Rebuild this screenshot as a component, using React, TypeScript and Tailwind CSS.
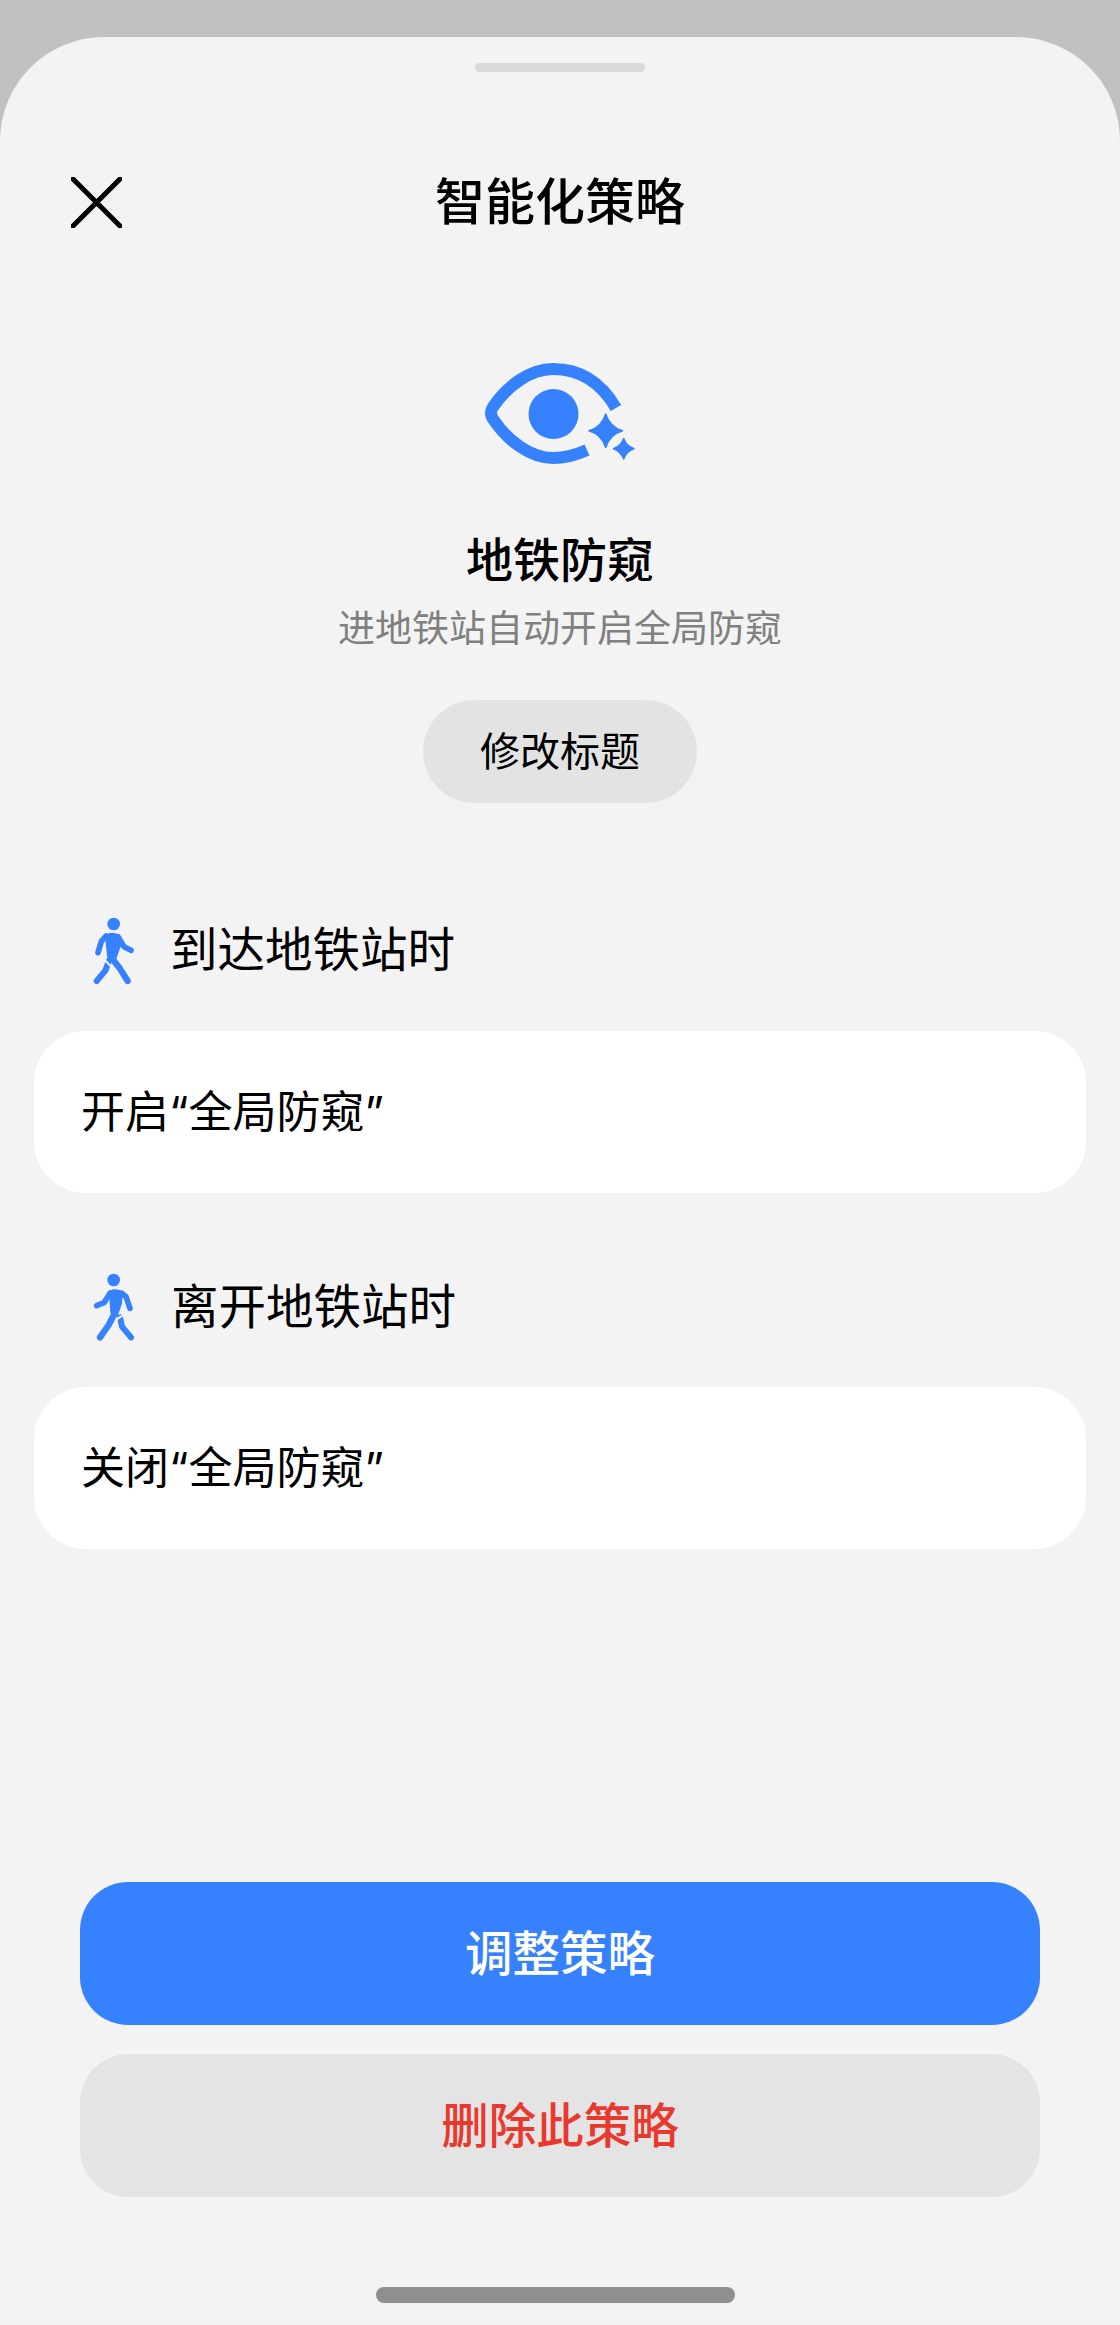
import React from 'react';

const FONT = "font-['Inter','Noto_Sans_CJK_SC',sans-serif]";
const BLUE = '#3681fd';

const EyeIcon = () => (
  <svg viewBox="10 0 220 150" className="block w-[220px] h-[150px]" fill="none">
    <path
      d="M176 68 C162 44 142 29 113 29 C90 29 67 46 53 67 Q49 73 53 79 C67 100 90 118 113 118 C125 118 136 115 147 110"
      stroke={BLUE}
      strokeWidth="12"
    />
    <circle cx="113.500" cy="74" r="25" fill={BLUE} />
    <path d="M165.700 74 Q169.500 87 182.500 90.700 Q169.500 94.500 165.700 107.500 Q162 94.500 149 90.700 Q162 87 165.700 74 Z" fill={BLUE} stroke={BLUE} strokeWidth="1.500" strokeLinejoin="round" />
    <path d="M183.700 98.500 Q186 106 194 108.700 Q186 111.500 183.700 119 Q181 111.500 173.500 108.700 Q181 106 183.700 98.500 Z" fill={BLUE} stroke={BLUE} strokeWidth="1.500" strokeLinejoin="round" />
  </svg>
);

const WalkIn = () => (
  <svg viewBox="0 0 336 270" className="block w-[112px] h-[90px] shrink-0" fill="none" strokeLinecap="round" strokeLinejoin="round">
    <circle cx="161" cy="72" r="19" fill={BLUE} />
    <path d="M148 180 L136 212 L110 243" stroke={BLUE} strokeWidth="18" />
    <path d="M130 176 L152 198" stroke="#f3f3f3" strokeWidth="6" />
    <path d="M138 108 L124 124 L114 158" stroke={BLUE} strokeWidth="17" />
    <path d="M174 110 L192 140 L213 151" stroke={BLUE} strokeWidth="17" />
    <path d="M138 106 Q158 96 176 106 L180 136 L166 176 L144 168 Z" fill={BLUE} stroke={BLUE} strokeWidth="6" />
    <path d="M152 170 L178 203 L203 243" stroke={BLUE} strokeWidth="19" />
  </svg>
);

const WalkOut = () => (
  <svg viewBox="0 0 336 270" className="block w-[112px] h-[90px] mt-[3px] shrink-0" fill="none" strokeLinecap="round" strokeLinejoin="round">
    <circle cx="161" cy="60" r="19" fill={BLUE} />
    <path d="M180 172 L186 200 L213 232" stroke={BLUE} strokeWidth="18" />
    <path d="M170 178 L192 164" stroke="#f3f3f3" strokeWidth="6" />
    <path d="M186 100 L198 110 L210 145" stroke={BLUE} strokeWidth="17" />
    <path d="M150 100 L132 128 L110 137" stroke={BLUE} strokeWidth="17" />
    <path d="M150 94 Q168 86 186 96 L183 130 L170 168 L154 158 Z" fill={BLUE} stroke={BLUE} strokeWidth="6" />
    <path d="M164 160 L146 195 L120 232" stroke={BLUE} strokeWidth="19" />
  </svg>
);

const App: React.FC = () => {
  return (
    <div className={`w-[1120px] h-[2325px] overflow-hidden bg-[#c1c1c1] pt-[37px] ${FONT}`}>
      <div className="h-[2288px] rounded-t-[104px] bg-[#f3f3f3] flex flex-col">
        {/* handle */}
        <div className="mt-[26px] mx-auto w-[170px] h-[9px] rounded-full bg-[#d9d9d9]" />

        {/* header */}
        <header className="mt-[100px] h-[60px] grid grid-cols-[1fr_auto_1fr] items-center">
          <div className="pl-[71px]">
            <svg viewBox="0 0 51 51" className="block w-[51px] h-[51px]" fill="none">
              <path d="M2 2 L49 49 M49 2 L2 49" stroke="#000" strokeWidth="5" strokeLinecap="round" />
            </svg>
          </div>
          <h1 className="text-[50px] leading-[60px] font-medium text-black">智能化策略</h1>
          <div />
        </header>

        {/* strategy summary */}
        <div className="mt-[108px] flex flex-col items-center">
          <EyeIcon />
          <h2 className="mt-[40px] text-[47px] leading-[60px] font-medium text-black">地铁防窥</h2>
          <p className="mt-[14px] text-[37px] leading-[50px] text-[#808080]">进地铁站自动开启全局防窥</p>
          <button className="mt-[46px] w-[274px] h-[103px] rounded-full bg-[#e3e3e3] text-[40px] text-black">修改标题</button>
        </div>

        {/* trigger */}
        <div className="mt-[97px] pl-[60px] h-[100px] flex items-start">
          <WalkIn />
          <span className="-ml-[2px] text-[47.500px] leading-[100px] text-black">到达地铁站时</span>
        </div>
        <div className="mt-[31px] mx-[34px] h-[162px] rounded-[52px] bg-white pl-[47px] flex items-center text-[44px] text-black">
          开启“全局防窥”
        </div>

        <div className="mt-[64px] pl-[60px] h-[100px] flex items-start">
          <WalkOut />
          <span className="-ml-[1px] text-[47.500px] leading-[100px] text-black">离开地铁站时</span>
        </div>
        <div className="mt-[30px] mx-[34px] h-[162px] rounded-[52px] bg-white pl-[47px] flex items-center text-[44px] text-black">
          关闭“全局防窥”
        </div>

        {/* actions */}
        <div className="mt-auto px-[80px] flex flex-col gap-[29px]">
          <button className="h-[143px] rounded-[48px] bg-[#3681fd] text-[47.500px] font-medium text-white">调整策略</button>
          <button className="h-[143px] rounded-[48px] bg-[#e4e4e4] text-[47.500px] font-medium text-[#e8392f]">删除此策略</button>
        </div>

        {/* home indicator */}
        <div className="mt-[90px] mb-[22px] ml-[376px] w-[359px] h-[16px] rounded-full bg-[#8f8f8f]" />
      </div>
    </div>
  );
};

export default App;
